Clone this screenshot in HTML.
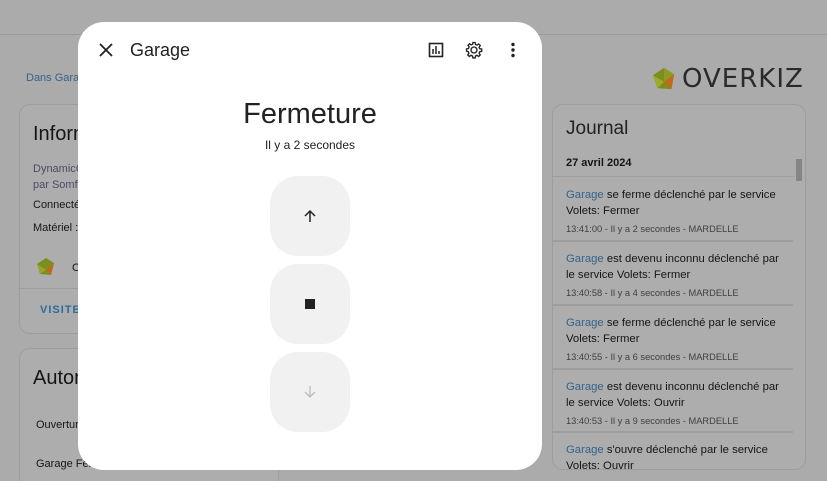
<!DOCTYPE html>
<html><head><meta charset="utf-8"><style>
*{box-sizing:border-box;margin:0;padding:0}
html,body{width:827px;height:481px;overflow:hidden}
body{background:#ababab;font-family:"Liberation Sans",sans-serif;position:relative;color:#151515}
.hdr{position:absolute;left:0;top:0;width:827px;height:35px;border-bottom:1px solid #9a9a9a;background:#ababab}
.card{position:absolute;background:#adadad;border:1px solid #9d9d9d;border-radius:11px;overflow:hidden}
.a{position:absolute;white-space:nowrap}
.link{color:#35628a}
.dlg{position:absolute;left:78px;top:22px;width:464px;height:448px;background:#fff;border-radius:26px}
.btn{position:absolute;left:192px;width:80px;height:80px;background:#f1f1f1;border-radius:28px}
.ev{position:absolute;left:0;font-size:11.3px;line-height:16px;padding:0 0 0 13px;border-bottom:2px solid #9d9d9d}
.ev .m{font-size:9.3px;color:#3f3f3f;margin-top:2px}
</style></head><body>
<div class="hdr"></div>
<div class="a link" style="left:26px;top:72px;font-size:11px">Dans Garage</div>
<div class="card" style="left:19px;top:104px;width:260px;height:230px">
 <div class="a" style="left:13px;top:18px;font-size:20px">Informations</div>
 <div class="a" style="left:13px;top:56px;font-size:11px;line-height:16px;color:#4a4a6a">DynamicGarage<br>par Somfy</div>
 <div class="a" style="left:13px;top:94px;font-size:11px">Connecté</div>
 <div class="a" style="left:13px;top:117px;font-size:11px">Matériel :</div>
 <svg class="a" style="left:16px;top:152px" width="20" height="20" viewBox="0 0 20 20"><polygon points="10,1 18,6 15,18 4,17 1,7" fill="#7d8d1f"/><polygon points="18,6 15,18 10,13" fill="#c06a1c"/><polygon points="1,7 4,17 10,13" fill="#98a32a"/></svg>
 <div class="a" style="left:52px;top:157px;font-size:11px">O</div>
 <div style="position:absolute;left:0;top:183px;width:100%;border-top:1px solid #9d9d9d"></div>
 <div class="a" style="left:20px;top:199px;font-size:11px;font-weight:bold;letter-spacing:1px;color:#2f6a9a">VISITER</div>
</div>
<div class="card" style="left:19px;top:348px;width:260px;height:150px">
 <div class="a" style="left:13px;top:18px;font-size:20px">Automatisations</div>
 <div class="a" style="left:16px;top:70px;font-size:11px">Ouverture</div>
 <div class="a" style="left:16px;top:109px;font-size:11px">Garage Fermeture</div>
</div>
<svg class="a" style="left:652px;top:67px" width="24" height="24" viewBox="0 0 26 26"><polygon points="13,1 24,8 21,24 6,23 1,9" fill="#7d8d1f"/><polygon points="24,8 21,24 13,16" fill="#c06a1c"/><polygon points="1,9 6,23 13,16" fill="#a0aa2a"/><polygon points="13,1 24,8 13,16" fill="#8e9a22"/></svg>
<div class="a" style="left:682px;top:64px;font-size:26px;line-height:30px;color:#2a2a2a;font-family:'DejaVu Sans',sans-serif;letter-spacing:1px">OVERKIZ</div>
<div class="card" style="left:552px;top:104px;width:254px;height:366px">
 <div class="a" style="left:13px;top:13px;font-size:19px;color:#222">Journal</div>
 <div class="a" style="left:13px;top:52px;font-size:11px;font-weight:bold">27 avril 2024</div>
 <div style="position:absolute;left:0;top:71px;width:240px;border-top:1px solid #9d9d9d"></div>
 <div style="position:absolute;left:0;top:72px;width:240px;height:300px;overflow:hidden">
  <div class="ev" style="top:0;height:65px;padding-top:10px;width:240px">
   <span class="link">Garage</span> se ferme déclenché par le service<br>Volets: Fermer<div class="m">13:41:00 - Il y a 2 secondes - MARDELLE</div></div>
  <div class="ev" style="top:65px;height:64px;padding-top:9px;width:240px">
   <span class="link">Garage</span> est devenu inconnu déclenché par<br>le service Volets: Fermer<div class="m">13:40:58 - Il y a 4 secondes - MARDELLE</div></div>
  <div class="ev" style="top:129px;height:64px;padding-top:9px;width:240px">
   <span class="link">Garage</span> se ferme déclenché par le service<br>Volets: Fermer<div class="m">13:40:55 - Il y a 6 secondes - MARDELLE</div></div>
  <div class="ev" style="top:193px;height:63px;padding-top:9px;width:240px">
   <span class="link">Garage</span> est devenu inconnu déclenché par<br>le service Volets: Ouvrir<div class="m">13:40:53 - Il y a 9 secondes - MARDELLE</div></div>
  <div class="ev" style="top:256px;height:64px;padding-top:9px;width:240px;border:0">
   <span class="link">Garage</span> s'ouvre déclenché par le service<br>Volets: Ouvrir</div>
 </div>
 <div style="position:absolute;left:243px;top:54px;width:6px;height:22px;background:#858585"></div>
</div>
<div class="dlg">
 <svg class="a" style="left:21px;top:21px" width="14" height="14" viewBox="0 0 14 14"><path d="M1 1L13 13M13 1L1 13" stroke="#222" stroke-width="1.8"/></svg>
 <div class="a" style="left:52px;top:18px;font-size:18px;color:#222">Garage</div>
 <svg class="a" style="left:350px;top:20px" width="16" height="16" viewBox="0 0 16 16"><rect x="1.5" y="1.5" width="13" height="13" fill="none" stroke="#222" stroke-width="1.6"/><path d="M5 12V7M8 12V4M11 12V9" stroke="#222" stroke-width="1.5"/></svg>
 <svg class="a" style="left:387px;top:19px" width="18" height="18" viewBox="0 0 24 24"><path d="M12 8a4 4 0 1 0 0 8a4 4 0 1 0 0-8zM10.5 2h3l.5 2.6 2 .9 2.2-1.5 2.1 2.1-1.5 2.2.9 2 2.6.5v3l-2.6.5-.9 2 1.5 2.2-2.1 2.1-2.2-1.5-2 .9-.5 2.6h-3l-.5-2.6-2-.9-2.2 1.5-2.1-2.1 1.5-2.2-.9-2L2 13.5v-3l2.6-.5.9-2L4 5.8 6.1 3.7 8.3 5.2l2-.9z" fill="none" stroke="#222" stroke-width="1.8"/></svg>
 <svg class="a" style="left:432px;top:20px" width="6" height="16" viewBox="0 0 6 16"><circle cx="3" cy="2.5" r="1.7" fill="#222"/><circle cx="3" cy="8" r="1.7" fill="#222"/><circle cx="3" cy="13.5" r="1.7" fill="#222"/></svg>
 <div class="a" style="left:0;width:464px;text-align:center;top:76px;font-size:29px;color:#222">Fermeture</div>
 <div class="a" style="left:0;width:464px;text-align:center;top:116px;font-size:12px;color:#222">Il y a 2 secondes</div>
 <div class="btn" style="top:154px"><svg class="a" style="left:33px;top:33px" width="14" height="14" viewBox="0 0 14 14"><path d="M7 13V2M2 7L7 2L12 7" fill="none" stroke="#222" stroke-width="1.5"/></svg></div>
 <div class="btn" style="top:242px"><div class="a" style="left:35px;top:35px;width:10px;height:10px;background:#222"></div></div>
 <div class="btn" style="top:330px"><svg class="a" style="left:33px;top:33px" width="14" height="14" viewBox="0 0 14 14"><path d="M7 1V12M2 7L7 12L12 7" fill="none" stroke="#bcbcbc" stroke-width="1.3"/></svg></div>
</div>
</body></html>
